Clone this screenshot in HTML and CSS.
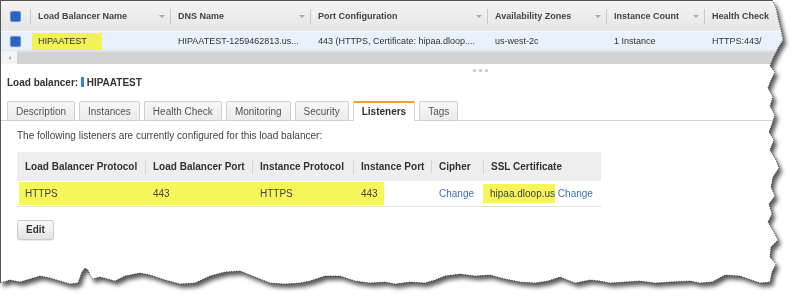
FILE: index.html
```html
<!DOCTYPE html>
<html lang="en">

<head>
    <meta charset="UTF-8">
    <title>Load Balancers</title>
    <link rel="stylesheet" href="styles.css">
</head>

<body>
    <div class="sheet">
        <div class="paper">
            <div class="page">
                <!-- load balancer list -->
                <div class="grid-head">
                    <div class="gcell cb"><span class="check"></span></div>
                    <div class="gcell c1">Load Balancer Name<span class="caret"></span></div>
                    <div class="gcell c2">DNS Name<span class="caret"></span></div>
                    <div class="gcell c3">Port Configuration<span class="caret"></span></div>
                    <div class="gcell c4">Availability Zones<span class="caret"></span></div>
                    <div class="gcell c5">Instance Count<span class="caret"></span></div>
                    <div class="gcell c6">Health Check</div>
                </div>
                <div class="grid-row">
                    <div class="gcell cb"><span class="check"></span></div>
                    <div class="gcell c1"><span class="hl-name">HIPAATEST</span></div>
                    <div class="gcell c2">HIPAATEST-1259462813.us...</div>
                    <div class="gcell c3">443 (HTTPS, Certificate: hipaa.dloop....</div>
                    <div class="gcell c4">us-west-2c</div>
                    <div class="gcell c5">1 Instance</div>
                    <div class="gcell c6">HTTPS:443/</div>
                </div>
                <div class="hscroll">
                    <div class="scroll-left"><span></span></div>
                    <div class="scroll-track"></div>
                </div>
                <div class="splitter"><i></i><i></i><i></i></div>

                <!-- details -->
                <div class="lb-title">Load balancer: <span class="mark"></span> HIPAATEST</div>
                <ul class="tabs">
                    <li>Description</li>
                    <li>Instances</li>
                    <li>Health Check</li>
                    <li>Monitoring</li>
                    <li>Security</li>
                    <li class="select">Listeners</li>
                    <li>Tags</li>
                </ul>
                <div class="panel">
                    <p class="intro">The following listeners are currently configured for this load balancer:</p>
                    <table class="listeners">
                        <thead>
                            <tr>
                                <th class="w1">Load Balancer Protocol</th>
                                <th class="w2">Load Balancer Port</th>
                                <th class="w3">Instance Protocol</th>
                                <th class="w4">Instance Port</th>
                                <th class="w5">Cipher</th>
                                <th>SSL Certificate</th>
                            </tr>
                        </thead>
                        <tbody>
                            <tr>
                                <td class="hl hl-first">HTTPS</td>
                                <td class="hl">443</td>
                                <td class="hl">HTTPS</td>
                                <td class="hl hl-part">443</td>
                                <td><a href="#">Change</a></td>
                                <td><span class="hl-cert">hipaa.dloop.us</span> <a href="#">Change</a></td>
                            </tr>
                        </tbody>
                    </table>
                    <button class="btn">Edit</button>
                </div>
            </div>
        </div>
        <svg class="tear" width="800" height="302" viewBox="0 0 800 302">
            <polyline points="772,0 776,8 778,18 781,30 783,40 778,48 773,58 770,66 775,72 771,80 768,88 773,97 770,106 775,115 772,124 769,132 774,140 770,150 776,160 779,168 773,177 771,187 775,196 769,204 772,214 768,222 774,232 778,240 771,247 770,257 776,264 772,272 770,282 760,283 740,276 725,275 712,282 700,283 690,281 670,282 655,283 640,281 625,282 610,283 600,281 590,280 575,283 560,277 548,281 535,283 520,282 505,279 490,275 475,276 460,274 445,276 435,280 425,283 410,282 395,284 385,282 370,283 355,281 340,276 325,276 310,281 300,283 285,284 270,283 255,277 240,271 225,272 210,276 195,283 180,284 165,280 150,275 140,273 125,276 115,281 100,277 92,279 88,270 85,268 82,272 78,283 70,284 60,281 50,278 40,276 30,279 20,282 10,280 0,283" />
        </svg>
    </div>
</body>

</html>
```

FILE: styles.css
```css
* {
    margin: 0;
    padding: 0;
    box-sizing: border-box;
}

body {
    background: #fff;
    font-family: "Liberation Sans", Arial, sans-serif;
    font-size: 10px;
    color: #333;
}

.sheet {
    position: relative;
    width: 800px;
    height: 302px;
}

.paper {
    filter: drop-shadow(3px 4px 2px rgba(0, 0, 0, .65));
}

.page {
    width: 786px;
    height: 290px;
    background: #fff;
    border-top: 1px solid #555;
    border-left: 1px solid #555;
    overflow: hidden;
    clip-path: polygon(0 0, 772px 0, 776px 8px, 778px 18px, 781px 30px, 783px 40px, 778px 48px, 773px 58px, 770px 66px, 775px 72px, 771px 80px, 768px 88px, 773px 97px, 770px 106px, 775px 115px, 772px 124px, 769px 132px, 774px 140px, 770px 150px, 776px 160px, 779px 168px, 773px 177px, 771px 187px, 775px 196px, 769px 204px, 772px 214px, 768px 222px, 774px 232px, 778px 240px, 771px 247px, 770px 257px, 776px 264px, 772px 272px, 770px 282px, 760px 283px, 740px 276px, 725px 275px, 712px 282px, 700px 283px, 690px 281px, 670px 282px, 655px 283px, 640px 281px, 625px 282px, 610px 283px, 600px 281px, 590px 280px, 575px 283px, 560px 277px, 548px 281px, 535px 283px, 520px 282px, 505px 279px, 490px 275px, 475px 276px, 460px 274px, 445px 276px, 435px 280px, 425px 283px, 410px 282px, 395px 284px, 385px 282px, 370px 283px, 355px 281px, 340px 276px, 325px 276px, 310px 281px, 300px 283px, 285px 284px, 270px 283px, 255px 277px, 240px 271px, 225px 272px, 210px 276px, 195px 283px, 180px 284px, 165px 280px, 150px 275px, 140px 273px, 125px 276px, 115px 281px, 100px 277px, 92px 279px, 88px 270px, 85px 268px, 82px 272px, 78px 283px, 70px 284px, 60px 281px, 50px 278px, 40px 276px, 30px 279px, 20px 282px, 10px 280px, 0 283px);
}

.tear {
    position: absolute;
    top: 0;
    left: 0;
    pointer-events: none;
}

.tear polyline {
    fill: none;
    stroke: #111;
    stroke-width: 1;
    stroke-dasharray: 1 1.5;
    opacity: .75;
}

/* top grid */
.grid-head,
.grid-row {
    display: flex;
    font-size: 9px;
}

.grid-head {
    height: 30px;
    background: linear-gradient(#f4f4f4, #e6e6e6);
    font-weight: bold;
    color: #444;
}

.grid-row {
    height: 19px;
    background: #e8f1fc;
    border-top: 1px solid #f6f9fe;
    color: #333;
}

.gcell {
    display: flex;
    align-items: center;
    padding: 0 5px 0 8px;
    white-space: nowrap;
    overflow: hidden;
}

.grid-head .gcell+.gcell {
    background: linear-gradient(#c9c9c9, #c9c9c9) no-repeat left center / 1px 15px;
}

.cb {
    width: 29px;
    padding: 0 0 0 9px;
}

.c1,
.c2 {
    width: 140px;
}

.c3 {
    width: 177px;
}

.c4 {
    width: 119px;
}

.c5 {
    width: 98px;
}

.c6 {
    flex: 1;
}

.caret {
    margin-left: auto;
    border-left: 3px solid transparent;
    border-right: 3px solid transparent;
    border-top: 3px solid #aaa;
}

.check {
    width: 11px;
    height: 11px;
    border-radius: 2px;
    background: #2866c4;
    border: 1px solid #6d95d4;
    box-shadow: 0 0 0 1px #e4e4e4;
}

.hl-name {
    margin-left: -6px;
    padding: 3px 15px 4px 6px;
    background: #f2f255;
}

.hscroll {
    display: flex;
    height: 14px;
    border-top: 1px solid #e4e4e4;
}

.scroll-left {
    width: 16px;
    display: flex;
    align-items: center;
    justify-content: center;
    background: #f4f4f4;
}

.scroll-left span {
    border-top: 2px solid transparent;
    border-bottom: 2px solid transparent;
    border-right: 3px solid #b5b5b5;
}

.scroll-track {
    flex: 1;
    background: #d3d3d3;
    border-top: 1px solid #e0e0e0;
}

.splitter {
    display: flex;
    align-items: center;
    gap: 3px;
    height: 11px;
    padding: 2px 0 0 472px;
}

.splitter i {
    width: 3px;
    height: 3px;
    border-radius: 50%;
    background: #c4c4c4;
}

/* details */
.lb-title {
    display: flex;
    align-items: center;
    height: 14px;
    padding-left: 6px;
    font-weight: bold;
    color: #333;
    white-space: pre;
}

.mark {
    display: inline-block;
    width: 3px;
    height: 10px;
    background: #3d82d6;
}

.tabs {
    display: flex;
    gap: 4px;
    list-style: none;
    margin-top: 12px;
    padding-left: 6px;
    border-bottom: 1px solid #d2d2d2;
}

.tabs li {
    height: 20px;
    line-height: 19px;
    padding: 0 8px;
    margin-bottom: -1px;
    border: 1px solid #d0d0d0;
    border-radius: 2px 2px 0 0;
    background: linear-gradient(#f7f7f7, #ececec);
    color: #555;
}

.tabs li.select {
    background: #fff;
    border-top: 2px solid #f0a02f;
    border-bottom-color: #fff;
    line-height: 18px;
    font-weight: bold;
    color: #333;
}

.panel {
    padding: 9px 0 0 16px;
}

.intro {
    height: 12px;
    line-height: 12px;
    color: #444;
}

.listeners {
    width: 584px;
    margin-top: 10px;
    border-collapse: collapse;
    text-align: left;
}

.listeners th {
    height: 29px;
    padding-left: 8px;
    background: #eee linear-gradient(#d4d4d4, #d4d4d4) no-repeat left center / 1px 14px;
    font-weight: bold;
    color: #333;
    white-space: nowrap;
}

.listeners th:first-child {
    background-image: none;
}

.listeners td {
    height: 25px;
    padding-left: 8px;
    border-bottom: 1px solid #e2e2e2;
    color: #444;
    white-space: nowrap;
}

.w1 {
    width: 128px;
}

.w2 {
    width: 107px;
}

.w3 {
    width: 101px;
}

.w4 {
    width: 78px;
}

.w5 {
    width: 52px;
}

.listeners td.hl {
    background: linear-gradient(#f6f65a, #f6f65a) no-repeat 0 1px / 100% 23px;
}

.listeners td.hl-first {
    background-position: 2px 1px;
}

.listeners td.hl-part {
    background-size: 31px 23px;
}

.hl-cert {
    margin-left: -8px;
    padding: 4px 0 4px 7px;
    background: #f6f65a;
}

.listeners a {
    color: #3a72b8;
    text-decoration: none;
}

.btn {
    margin-top: 13px;
    height: 20px;
    padding: 0 8px;
    border: 1px solid #c9c9c9;
    border-radius: 3px;
    background: linear-gradient(#fafafa, #e4e4e4);
    box-shadow: 0 1px 1px rgba(0, 0, 0, .08);
    font-family: "Liberation Sans", Arial, sans-serif;
    font-size: 10px;
    font-weight: bold;
    color: #333;
}
```
